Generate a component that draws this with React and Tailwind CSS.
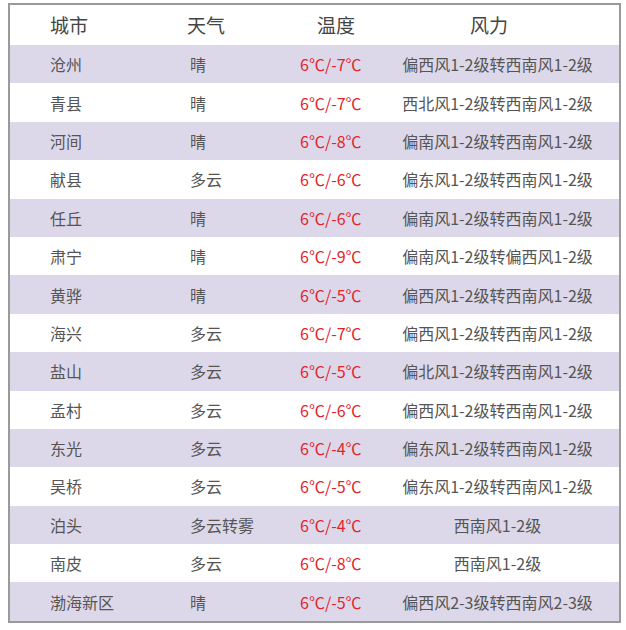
import React from "react";

const rows = [
  ["沧州", "晴", "6℃/-7℃", "偏西风1-2级转西南风1-2级"],
  ["青县", "晴", "6℃/-7℃", "西北风1-2级转西南风1-2级"],
  ["河间", "晴", "6℃/-8℃", "偏南风1-2级转西南风1-2级"],
  ["献县", "多云", "6℃/-6℃", "偏东风1-2级转西南风1-2级"],
  ["任丘", "晴", "6℃/-6℃", "偏南风1-2级转西南风1-2级"],
  ["肃宁", "晴", "6℃/-9℃", "偏南风1-2级转偏西风1-2级"],
  ["黄骅", "晴", "6℃/-5℃", "偏西风1-2级转西南风1-2级"],
  ["海兴", "多云", "6℃/-7℃", "偏西风1-2级转西南风1-2级"],
  ["盐山", "多云", "6℃/-5℃", "偏北风1-2级转西南风1-2级"],
  ["孟村", "多云", "6℃/-6℃", "偏西风1-2级转西南风1-2级"],
  ["东光", "多云", "6℃/-4℃", "偏东风1-2级转西南风1-2级"],
  ["吴桥", "多云", "6℃/-5℃", "偏东风1-2级转西南风1-2级"],
  ["泊头", "多云转雾", "6℃/-4℃", "西南风1-2级"],
  ["南皮", "多云", "6℃/-8℃", "西南风1-2级"],
  ["渤海新区", "晴", "6℃/-5℃", "偏西风2-3级转西南风2-3级"],
];

export default function App() {
  return (
    <div className="w-[626px] h-[630px] bg-white pt-[3px] font-['Noto_Sans_CJK_SC','Noto_Sans',sans-serif]">
      <div className="ml-[8px] w-[613px] border-2 border-[#9a9a9a] bg-white">
        {/* 表头 */}
        <div className="grid grid-cols-[180px_110px_90px_1fr] h-[40px] items-center text-[19px] text-[#444]">
          <span className="pl-[40px]">城市</span>
          <span className="-ml-[3px]">天气</span>
          <span className="pl-[17px]">温度</span>
          <span className="pl-[80px]">风力</span>
        </div>

        {/* 数据行 */}
        {rows.map(([city, weather, temp, wind], i) => (
          <div
            key={city}
            className={`grid grid-cols-[180px_110px_90px_1fr] h-[38.4px] items-center text-[16px] text-[#555] ${
              i % 2 === 0 ? "bg-[#ddd8e9]" : "bg-white"
            }`}
          >
            <span className="pl-[40px]">{city}</span>
            <span>{weather}</span>
            <span className="text-[#e3242b]">{temp}</span>
            <span className="text-center pr-[14px]">{wind}</span>
          </div>
        ))}
      </div>
    </div>
  );
}
